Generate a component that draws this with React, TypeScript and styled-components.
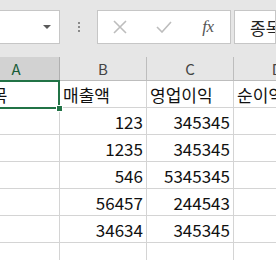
import React from 'react'
import styled, { createGlobalStyle } from 'styled-components'

const GlobalStyle = createGlobalStyle`
  html, body {
    margin: 0;
    padding: 0;
    background: #e6e6e6;
    overflow: hidden;
  }
  body {
    font-family: 'Noto Sans CJK KR', 'Noto Sans', sans-serif;
  }
`

const green = '#217346'
const gridLine = '#d4d4d4'

const Page = styled.div`
  width: 276px;
  height: 260px;
  overflow: hidden;
`

const FormulaBar = styled.div`
  display: flex;
  align-items: flex-start;
  height: 57px;
  padding-top: 10px;
  box-sizing: border-box;
`

const NameBox = styled.div`
  position: relative;
  margin-left: -10px;
  width: 70px;
  height: 34px;
  box-sizing: border-box;
  background: #fff;
  border: 1px solid #c6c6c6;
  display: flex;
  align-items: center;
  justify-content: flex-end;
  padding-right: 8px;
`

const Caret = styled.div`
  width: 0;
  height: 0;
  border-left: 4px solid transparent;
  border-right: 4px solid transparent;
  border-top: 4px solid #5a5a5a;
`

const Grip = styled.div`
  width: 37px;
  height: 34px;
  display: flex;
  flex-direction: column;
  align-items: center;
  justify-content: center;
  gap: 2px;
`

const GripDot = styled.span`
  width: 2px;
  height: 2px;
  background: #8a8a8a;
`

const ActionBox = styled.div`
  width: 134px;
  height: 34px;
  box-sizing: border-box;
  background: #fff;
  border: 1px solid #c6c6c6;
  display: flex;
  align-items: center;
`

const ActionSlot = styled.div<{ $w: number }>`
  width: ${(p) => p.$w}px;
  height: 100%;
  display: flex;
  align-items: center;
  justify-content: center;
`

const Fx = styled.span`
  font-family: 'Liberation Serif', serif;
  font-style: italic;
  font-size: 17px;
  color: #555;
  letter-spacing: -0.5px;
`

const FormulaInput = styled.div`
  flex: 1;
  margin-left: 3px;
  height: 34px;
  box-sizing: border-box;
  background: #fff;
  border: 1px solid #c6c6c6;
  display: flex;
  align-items: center;
  padding-left: 15px;
  font-size: 17px;
  color: #222;
  white-space: nowrap;
  overflow: hidden;
`

const Sheet = styled.div`
  display: grid;
  grid-template-columns: 87px 87px 87px 87px;
  grid-auto-rows: 27px;
  grid-template-rows: 24px;
  margin-left: -27px;
  background: #fff;
`

const ColHeader = styled.div<{ $selected?: boolean }>`
  position: relative;
  box-sizing: border-box;
  background: ${(p) => (p.$selected ? '#d2d2d2' : '#e6e6e6')};
  border-right: 1px solid ${(p) => (p.$selected ? '#b0b0b0' : '#bdbdbd')};
  border-bottom: 1px solid #bdbdbd;
  color: ${(p) => (p.$selected ? '#185c37' : '#444')};
  font-size: 15px;
  display: flex;
  align-items: center;
  justify-content: center;
`

const Cell = styled.div<{ $num?: boolean }>`
  position: relative;
  box-sizing: border-box;
  border-right: 1px solid ${gridLine};
  border-bottom: 1px solid ${gridLine};
  font-size: 17px;
  color: #111;
  display: flex;
  align-items: center;
  justify-content: ${(p) => (p.$num ? 'flex-end' : 'flex-start')};
  padding: 0 3px;
  white-space: nowrap;
  overflow: hidden;
`

const SelectedCell = styled(Cell)`
  overflow: visible;
  z-index: 2;
`

const SelectionFrame = styled.div`
  position: absolute;
  left: -2px;
  top: -1px;
  right: -1px;
  bottom: -2px;
  border: 2px solid ${green};
  pointer-events: none;
`

const FillHandle = styled.div`
  position: absolute;
  right: -4px;
  bottom: -5px;
  width: 5px;
  height: 5px;
  background: ${green};
  border: 1px solid #fff;
`

const rows: [string, string, string, string][] = [
  ['', '123', '345345', ''],
  ['', '1235', '345345', ''],
  ['', '546', '5345345', ''],
  ['', '56457', '244543', ''],
  ['', '34634', '345345', ''],
  ['', '', '', ''],
]

const App = () => {
  return (
    <Page>
      <GlobalStyle />
      <FormulaBar>
        <NameBox>
          <Caret />
        </NameBox>
        <Grip>
          <GripDot />
          <GripDot />
          <GripDot />
        </Grip>
        <ActionBox>
          <ActionSlot $w={44}>
            <svg width="14" height="14" viewBox="0 0 14 14">
              <path d="M1 1 L13 13 M13 1 L1 13" stroke="#bdbdbd" strokeWidth="1.6" fill="none" />
            </svg>
          </ActionSlot>
          <ActionSlot $w={44}>
            <svg width="16" height="12" viewBox="0 0 16 12">
              <path d="M1 6 L6 11 L15 1" stroke="#bdbdbd" strokeWidth="1.6" fill="none" />
            </svg>
          </ActionSlot>
          <ActionSlot $w={44}>
            <Fx>fx</Fx>
          </ActionSlot>
        </ActionBox>
        <FormulaInput>종목</FormulaInput>
      </FormulaBar>
      <Sheet>
        <ColHeader $selected>A</ColHeader>
        <ColHeader>B</ColHeader>
        <ColHeader>C</ColHeader>
        <ColHeader>D</ColHeader>

        <SelectedCell>
          종목
          <SelectionFrame />
          <FillHandle />
        </SelectedCell>
        <Cell>매출액</Cell>
        <Cell>영업이익</Cell>
        <Cell>순이익</Cell>

        {rows.map((r, i) =>
          r.map((v, j) => (
            <Cell key={`${i}-${j}`} $num>
              {v}
            </Cell>
          ))
        )}
      </Sheet>
    </Page>
  )
}

export default App
